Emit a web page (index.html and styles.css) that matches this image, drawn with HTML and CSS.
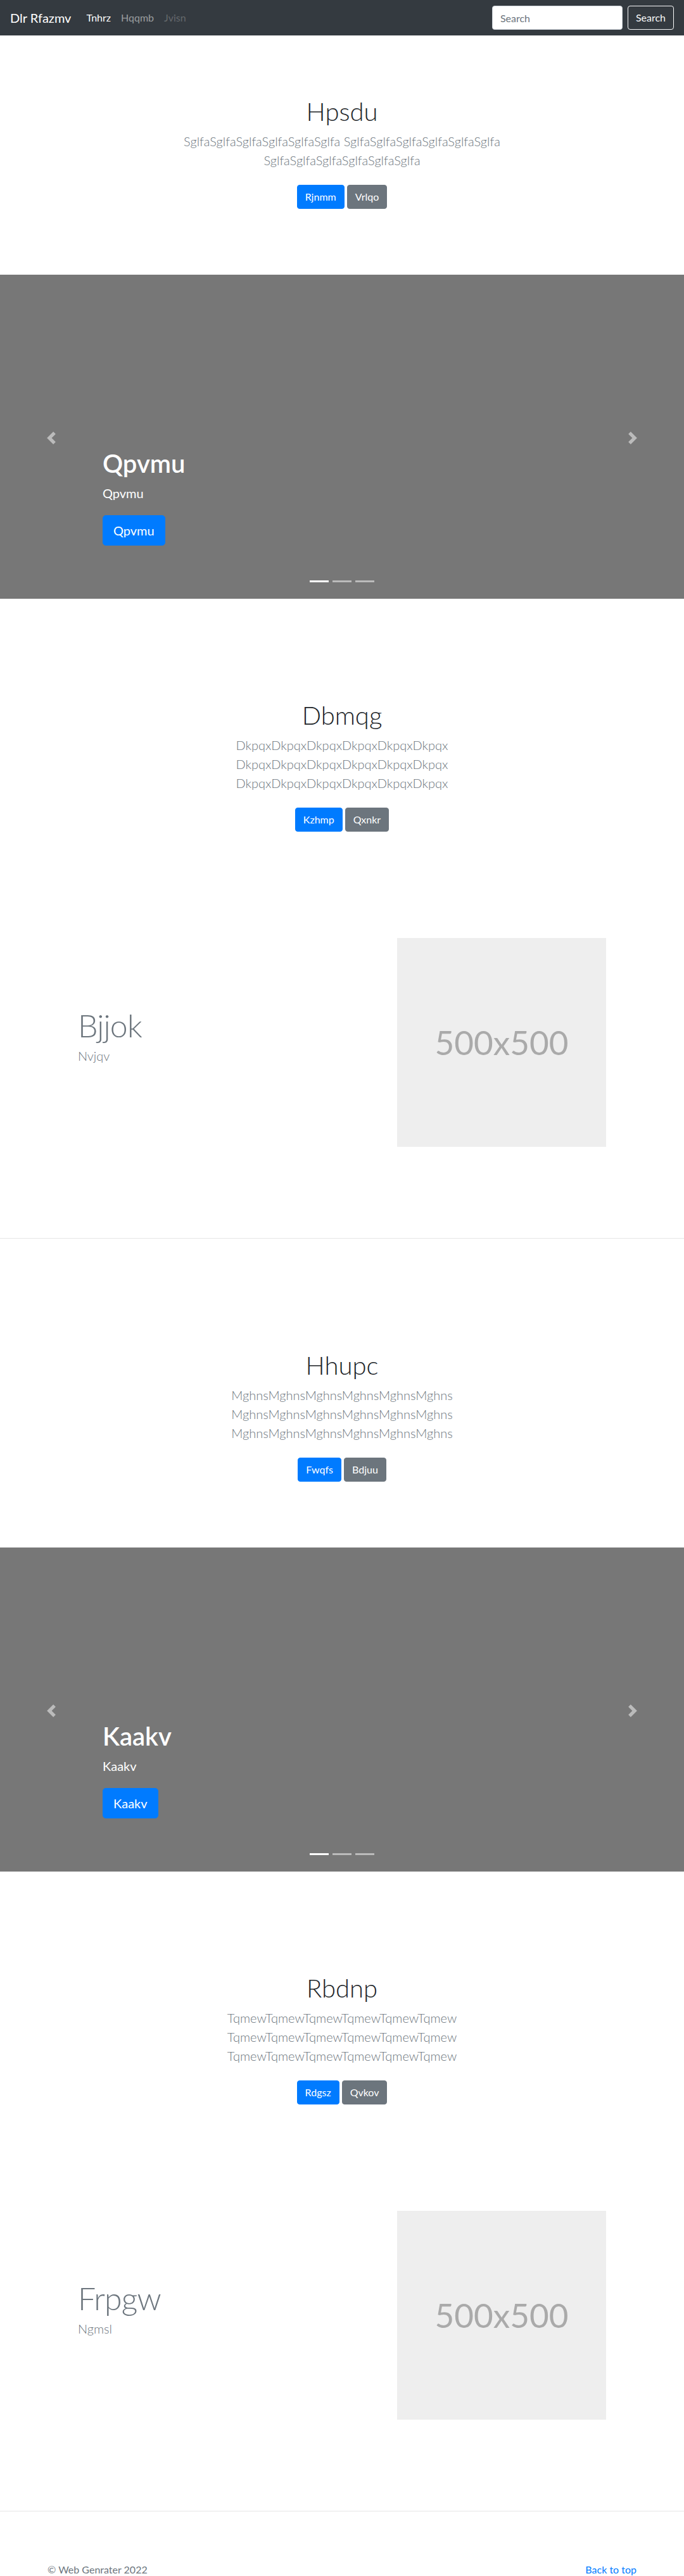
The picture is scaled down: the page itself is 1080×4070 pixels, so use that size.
FILE: index.html
```html
<!DOCTYPE html>
<html lang="en">
<head>
<meta charset="utf-8">
<title>Dlr Rfazmv</title>
<link rel="stylesheet" href="styles.css">
</head>
<body>
<nav class="navbar">
  <a class="brand" href="#">Dlr Rfazmv</a>
  <ul class="nav">
    <li><a class="nav-link active" href="#">Tnhrz</a></li>
    <li><a class="nav-link" href="#">Hqqmb</a></li>
    <li><a class="nav-link disabled" href="#">Jvisn</a></li>
  </ul>
  <form class="search">
    <input class="search-input" type="text" placeholder="Search">
    <button class="search-btn" type="button">Search</button>
  </form>
</nav>

<main>
  <section class="jumbotron">
    <div class="jumbo-inner">
      <h1 class="jumbo-title">Hpsdu</h1>
      <p class="lead">SglfaSglfaSglfaSglfaSglfaSglfa SglfaSglfaSglfaSglfaSglfaSglfa SglfaSglfaSglfaSglfaSglfaSglfa</p>
      <p class="actions"><a class="btn btn-primary" href="#">Rjnmm</a><a class="btn btn-secondary" href="#">Vrlqo</a></p>
    </div>
  </section>

  <section class="carousel">
    <div class="caption">
      <h1 class="caption-title">Qpvmu</h1>
      <p class="caption-text">Qpvmu</p>
      <p class="caption-action"><a class="btn btn-lg btn-primary" href="#">Qpvmu</a></p>
    </div>
    <a class="control control-prev" href="#"><svg viewBox="0 0 8 8" width="20" height="20"><path fill="#fff" d="M5.25 0l-4 4 4 4 1.5-1.5L4.25 4l2.5-2.5L5.25 0z"/></svg></a>
    <a class="control control-next" href="#"><svg viewBox="0 0 8 8" width="20" height="20"><path fill="#fff" d="M2.75 0l-1.5 1.5L3.75 4l-2.5 2.5L2.75 8l4-4-4-4z"/></svg></a>
    <ol class="indicators"><li class="active"></li><li></li><li></li></ol>
  </section>

  <section class="jumbotron">
    <div class="jumbo-inner">
      <h1 class="jumbo-title">Dbmqg</h1>
      <p class="lead">DkpqxDkpqxDkpqxDkpqxDkpqxDkpqx DkpqxDkpqxDkpqxDkpqxDkpqxDkpqx DkpqxDkpqxDkpqxDkpqxDkpqxDkpqx</p>
      <p class="actions"><a class="btn btn-primary" href="#">Kzhmp</a><a class="btn btn-secondary" href="#">Qxnkr</a></p>
    </div>
  </section>

  <section class="featurette">
    <div class="feat-row">
      <div class="feat-text">
        <h2 class="feat-title">Bjjok</h2>
        <p class="feat-lead">Nvjqv</p>
      </div>
      <div class="placeholder"><span>500x500</span></div>
    </div>
  </section>

  <hr class="divider">

  <section class="jumbotron">
    <div class="jumbo-inner">
      <h1 class="jumbo-title">Hhupc</h1>
      <p class="lead">MghnsMghnsMghnsMghnsMghnsMghns MghnsMghnsMghnsMghnsMghnsMghns MghnsMghnsMghnsMghnsMghnsMghns</p>
      <p class="actions"><a class="btn btn-primary" href="#">Fwqfs</a><a class="btn btn-secondary" href="#">Bdjuu</a></p>
    </div>
  </section>

  <section class="carousel">
    <div class="caption">
      <h1 class="caption-title">Kaakv</h1>
      <p class="caption-text">Kaakv</p>
      <p class="caption-action"><a class="btn btn-lg btn-primary" href="#">Kaakv</a></p>
    </div>
    <a class="control control-prev" href="#"><svg viewBox="0 0 8 8" width="20" height="20"><path fill="#fff" d="M5.25 0l-4 4 4 4 1.5-1.5L4.25 4l2.5-2.5L5.25 0z"/></svg></a>
    <a class="control control-next" href="#"><svg viewBox="0 0 8 8" width="20" height="20"><path fill="#fff" d="M2.75 0l-1.5 1.5L3.75 4l-2.5 2.5L2.75 8l4-4-4-4z"/></svg></a>
    <ol class="indicators"><li class="active"></li><li></li><li></li></ol>
  </section>

  <section class="jumbotron">
    <div class="jumbo-inner">
      <h1 class="jumbo-title">Rbdnp</h1>
      <p class="lead">TqmewTqmewTqmewTqmewTqmewTqmew TqmewTqmewTqmewTqmewTqmewTqmew TqmewTqmewTqmewTqmewTqmewTqmew</p>
      <p class="actions"><a class="btn btn-primary" href="#">Rdgsz</a><a class="btn btn-secondary" href="#">Qvkov</a></p>
    </div>
  </section>

  <section class="featurette">
    <div class="feat-row">
      <div class="feat-text">
        <h2 class="feat-title">Frpgw</h2>
        <p class="feat-lead">Ngmsl</p>
      </div>
      <div class="placeholder"><span>500x500</span></div>
    </div>
  </section>

  <hr class="divider">
</main>

<footer class="footer">
  <div class="footer-inner">
    <p class="copy">© Web Genrater 2022</p>
    <a class="back" href="#">Back to top</a>
  </div>
</footer>
</body>
</html>
```

FILE: styles.css
```css
* { box-sizing: border-box; }

body {
  margin: 0;
  font-family: Lato, "Open Sans", "Liberation Sans", sans-serif;
  font-size: 16px;
  line-height: 1.5;
  color: #212529;
  background: #fff;
}

a { text-decoration: none; }

/* Navbar */
.navbar {
  display: flex;
  align-items: center;
  height: 56px;
  padding: 8px 16px;
  background: #343a40;
}
.brand {
  font-size: 20px;
  line-height: 30px;
  padding: 5px 0;
  margin-right: 16px;
  color: #fff;
}
.nav {
  display: flex;
  list-style: none;
  margin: 0;
  padding: 0;
}
.nav-link {
  display: block;
  padding: 8px;
  color: rgba(255,255,255,.5);
}
.nav-link.active { color: #fff; }
.nav-link.disabled { color: rgba(255,255,255,.25); }

.search {
  display: flex;
  margin: 0 0 0 auto;
}
.search-input {
  width: 206px;
  height: 38px;
  padding: 6px 12px;
  margin-right: 8px;
  font: inherit;
  font-size: 16px;
  color: #495057;
  background: #fff;
  border: 1px solid #ced4da;
  border-radius: 4px;
}
.search-input::placeholder { color: #6c757d; }
.search-btn {
  height: 38px;
  padding: 6px 12px;
  font: inherit;
  font-size: 16px;
  color: #f8f9fa;
  background: transparent;
  border: 1px solid #f8f9fa;
  border-radius: 4px;
}

/* Jumbotron */
.jumbotron {
  padding: 96px 0;
  text-align: center;
}
.jumbo-inner {
  max-width: 640px;
  margin: 0 auto;
  padding: 0 15px;
}
.jumbo-title {
  margin: 0 0 8px;
  font-size: 40px;
  font-weight: 300;
  line-height: 1.2;
  color: #212529;
}
.lead {
  margin: 0 0 16px;
  font-size: 20px;
  font-weight: 300;
  line-height: 1.5;
  color: #6c757d;
}
.actions {
  display: flex;
  justify-content: center;
  gap: 4px;
  margin: 0;
}

/* Buttons */
.btn {
  display: inline-block;
  margin: 8px 0;
  padding: 6px 12px;
  font-size: 16px;
  line-height: 24px;
  color: #fff;
  border: 1px solid transparent;
  border-radius: 4px;
}
.btn-primary { background: #007bff; border-color: #007bff; }
.btn-secondary { background: #6c757d; border-color: #6c757d; }
.btn-lg {
  margin: 0;
  padding: 8px 16px;
  font-size: 20px;
  line-height: 30px;
  border-radius: 5px;
}

/* Carousel */
.carousel {
  position: relative;
  height: 512px;
  margin-bottom: 64px;
  background: #777;
}
.caption {
  position: absolute;
  left: 15%;
  right: 15%;
  bottom: 48px;
  padding: 20px 0;
  color: #fff;
  text-align: left;
}
.caption-title {
  margin: 0 0 8px;
  font-size: 40px;
  font-weight: 600;
  line-height: 1.2;
}
.caption-text {
  margin: 0 0 20px;
  font-size: 20px;
  line-height: 30px;
}
.caption-action { margin: 0 0 16px; }

.control {
  position: absolute;
  top: 0;
  bottom: 0;
  width: 15%;
  display: flex;
  align-items: center;
  justify-content: center;
  opacity: .5;
}
.control svg { display: block; margin-top: 3px; }
.control-prev { left: 0; }
.control-next { right: 0; }

.indicators {
  position: absolute;
  left: 15%;
  right: 15%;
  bottom: 0;
  display: flex;
  justify-content: center;
  margin: 0 0 16px;
  padding: 0;
  list-style: none;
}
.indicators li {
  box-sizing: content-box;
  width: 30px;
  height: 3px;
  margin: 0 3px;
  background: #fff;
  background-clip: padding-box;
  border-top: 10px solid transparent;
  border-bottom: 10px solid transparent;
  opacity: .5;
}
.indicators li.active { opacity: 1; }

/* Featurette */
.featurette {
  max-width: 960px;
  margin: 0 auto;
  padding: 64px 15px 64px;
}
.feat-row {
  display: grid;
  grid-template-columns: 1fr 330px;
  gap: 30px;
  align-items: center;
  padding: 0 48px;
}
.feat-title {
  margin: 0 0 8px;
  font-size: 50px;
  font-weight: 300;
  line-height: 1;
  letter-spacing: -0.8px;
  color: #6c757d;
}
.feat-lead {
  margin: 0 0 16px;
  font-size: 20px;
  font-weight: 300;
  line-height: 1.5;
  color: #6c757d;
}
.placeholder {
  display: flex;
  align-items: center;
  justify-content: center;
  width: 330px;
  height: 330px;
  background: #eee;
  color: #aaa;
  font-size: 53px;
  font-weight: 400;
}

.divider {
  margin: 80px 0;
  border: 0;
  border-top: 1px solid rgba(0,0,0,.1);
}

/* Footer */
.footer {
  padding-bottom: 48px;
  color: #6c757d;
}
.footer-inner {
  display: flex;
  justify-content: space-between;
  max-width: 960px;
  margin: 0 auto;
  padding: 0 15px;
}
.copy { margin: 0 0 16px; }
.back { color: #007bff; }
```
